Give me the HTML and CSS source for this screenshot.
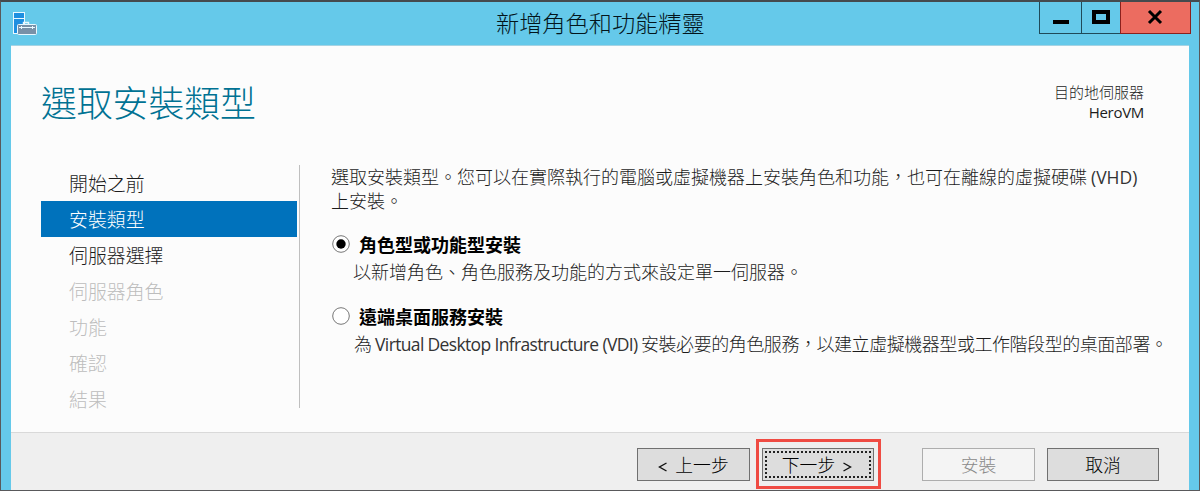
FILE: index.html
```html
<!DOCTYPE html>
<html lang="zh-Hant">
<head>
<meta charset="utf-8">
<title>新增角色和功能精靈</title>
<link rel="stylesheet" href="styles.css">
</head>
<body>
<div class="window">
  <header class="titlebar">
    <svg class="app-icon" width="26" height="26" viewBox="0 0 26 26">
      <rect x="1.5" y="1.500" width="11" height="21" fill="#1e8fe0" stroke="#e8f8ff"/>
      <path d="M2 7.500h10" stroke="#e8f8ff"/>
      <path d="M11.500 13v-1.500h5V13" fill="none" stroke="#e8f8ff" stroke-width="1.400"/>
      <rect x="5.500" y="13.500" width="19" height="10" rx="1" fill="#7891a8" stroke="#e8f8ff"/>
      <path d="M7 16.500h16M9.500 15v3M20.500 15v3" stroke="#e8f8ff"/>
    </svg>
    <h1 class="window-title">新增角色和功能精靈</h1>
    <div class="controls">
      <span class="control minimize"><svg width="41" height="31"><rect x="13" y="18" width="16" height="4"/></svg></span>
      <span class="control maximize"><svg width="38" height="31"><path d="M12 10h14v10H12z" fill="none" stroke="#000" stroke-width="4"/></svg></span>
      <span class="control close"><svg width="69" height="31"><path d="M28 9l12 12M40 9L28 21" stroke="#000" stroke-width="3"/></svg></span>
    </div>
  </header>
  <main class="content">
    <div class="heading">
      <h2 class="page-title">選取安裝類型</h2>
      <div class="destination"><div>目的地伺服器</div><div class="host">HeroVM</div></div>
    </div>
    <div class="columns">
      <nav class="steps">
        <div class="step">開始之前</div>
        <div class="step active">安裝類型</div>
        <div class="step">伺服器選擇</div>
        <div class="step disabled">伺服器角色</div>
        <div class="step disabled">功能</div>
        <div class="step disabled">確認</div>
        <div class="step disabled">結果</div>
      </nav>
      <section class="panel">
        <p class="intro">選取安裝類型。您可以在實際執行的電腦或虛擬機器上安裝角色和功能，也可在離線的虛擬硬碟 <span class="latin">(VHD)</span><br>上安裝。</p>
        <div class="option">
          <svg class="radio" width="18" height="18"><circle cx="9" cy="9" r="8.300" fill="#fff" stroke="#777"/><circle cx="9" cy="9" r="4.700"/></svg>
          <div class="option-title">角色型或功能型安裝</div>
          <div class="option-text">以新增角色、角色服務及功能的方式來設定單一伺服器。</div>
        </div>
        <div class="option">
          <svg class="radio" width="18" height="18"><circle cx="9" cy="9" r="8.300" fill="#fff" stroke="#777"/></svg>
          <div class="option-title">遠端桌面服務安裝</div>
          <div class="option-text condensed">為 <span class="latin vdi">Virtual Desktop Infrastructure (VDI)</span> 安裝必要的角色服務，以建立虛擬機器型或工作階段型的桌面部署。</div>
        </div>
      </section>
    </div>
  </main>
  <footer class="actions">
    <div class="button previous"><svg class="chevron" width="9" height="10"><path d="M8.500 1L1.500 5l7 4" fill="none" stroke="#111" stroke-width="1.400"/></svg>上一步</div>
    <div class="highlight"><div class="button next"><span class="focus">下一步<svg class="chevron" width="9" height="10"><path d="M.5 1l7 4-7 4" fill="none" stroke="#111" stroke-width="1.400"/></svg></span></div></div>
    <div class="button unavailable">安裝</div>
    <div class="button cancel">取消</div>
  </footer>
</div>
</body>
</html>
```
FILE: styles.css
```css
* { box-sizing: border-box; }
body { margin: 0; overflow: hidden; }
.window {
  width: 1200px; height: 491px;
  display: grid; grid-template-rows: 43px 387px 1fr;
  padding: 0 10px; border: 1px solid #59595b; border-top: 2px solid #454a4e;
  background: #65c9ea;
  font-family: "Noto Sans CJK TC", "Noto Sans", sans-serif;
  font-weight: 300; font-size: 18px; color: #1c1c1c; white-space: nowrap;
}
.titlebar { display: grid; grid-template-columns: 44px 1fr 152px; align-items: start; margin-right: -2px; }
.app-icon { margin: 9px 0 0 1px; }
.window-title {
  margin: 0; padding-left: 441px; font-size: 23.200px; line-height: 40px;
  font-weight: 300; color: #03151c;
}
.controls { display: flex; height: 32px; border: 1px solid #1f4a59; border-top: 0; }
.control { height: 31px; }
.control svg { display: block; }
.minimize { width: 42px; border-right: 1px solid #1f4a59; }
.maximize { width: 39px; border-right: 1px solid #8b201c; }
.close { flex: 1; background: #ec6c60; box-shadow: 0 0 0 1px #8b201c; clip-path: inset(0 -1px -1px -1px); }
.content { background: #fcfcfc; border-top: 1px solid #a6d3e3; padding: 0 0 0 30px; }
.heading { display: flex; justify-content: space-between; height: 119px; padding: 29px 45px 0 0; }
.page-title { margin: 0; font-size: 35.800px; line-height: 52px; font-weight: 300; color: #007293; }
.destination { padding-top: 6px; text-align: right; font-size: 15px; line-height: 21px; }
.host { font-family: "Open Sans", "Noto Sans", sans-serif; font-weight: 400; font-size: 15px; letter-spacing: -.3px; }
.columns { display: grid; grid-template-columns: 259px 1fr; }
.steps { height: 243px; border-right: 1px solid #bfbfbf; padding-right: 2px; }
.step { height: 36px; line-height: 36px; padding-left: 28px; font-size: 18.900px; }
.active { background: #0072bc; color: #fff; }
.disabled { color: #bdbdbd; }
.panel { padding-left: 31px; }
.intro { margin: -1px 0 19px; line-height: 24px; }
.latin { font-family: "Open Sans", "Noto Sans", sans-serif; font-weight: 400; font-size: 17.500px; line-height: 1; color: #333; }
.vdi { letter-spacing: -.650px; }
.option { display: grid; grid-template-columns: 28px 1fr; height: 72px; align-content: start; }
.radio { margin: 4px 0 0 1px; }
.option-title { font-weight: 700; line-height: 27px; color: #000; }
.option-text { grid-column: 1 / 3; padding-left: 22px; line-height: 27px; }
.condensed { padding-left: 23px; letter-spacing: -.450px; }
.actions { display: flex; align-items: flex-start; background: #efefef; border-top: 1px solid #d9d9d9; padding-left: 626px; }
.button {
  width: 113px; height: 33px; margin-top: 15px; border: 1px solid #707070;
  background: #ddd; color: #000; display: flex; align-items: center; justify-content: center;
  font-size: 17.800px; line-height: 27px;
}
.chevron { margin: 4px 8px 0 0; }
.highlight { width: 125px; height: 50px; margin: 6px 0 0 6px; border: 3px solid #ef4b43; padding: 3px; }
.next { width: 112px; margin: 3px 0 0; }
.focus { display: flex; align-items: center; justify-content: center; width: 106px; height: 27px; border: 2px dotted #222; }
.next .chevron { margin: 4px 2px 0 8px; }
.unavailable { margin-left: 41px; color: #8a8a8a; background: #f4f4f4; border-color: #adadad; }
.cancel { width: 112px; margin-left: 12px; }
```
